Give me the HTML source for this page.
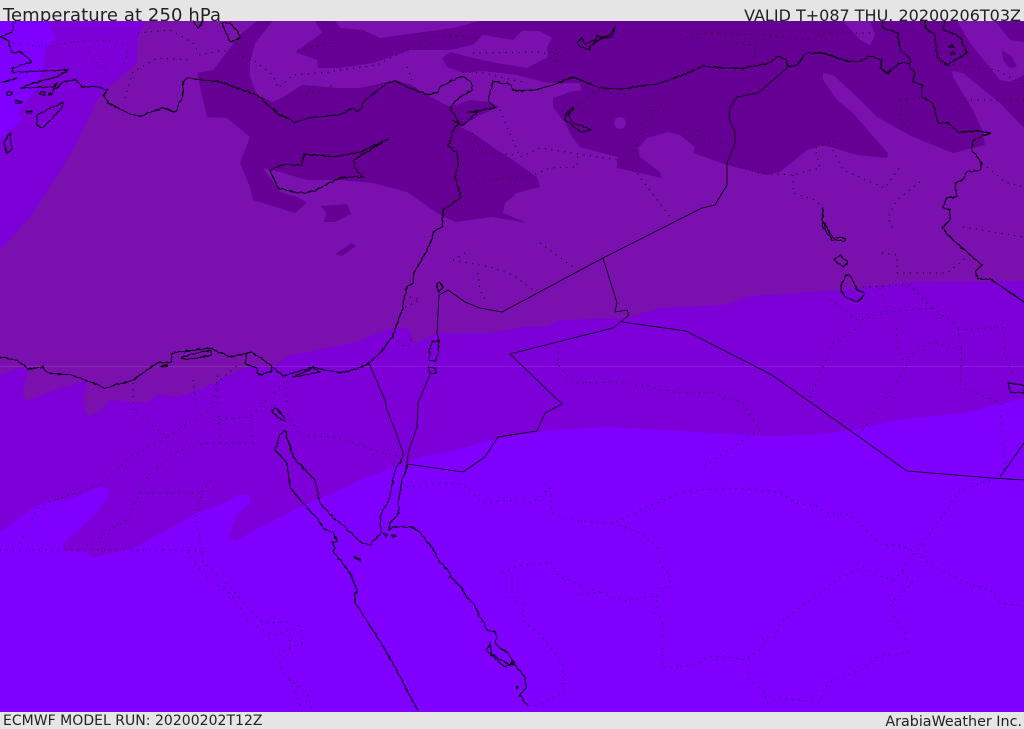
<!DOCTYPE html>
<html><head><meta charset="utf-8"><style>
html,body{margin:0;padding:0;width:1024px;height:729px;overflow:hidden;background:#e5e5e5}
svg{display:block;position:absolute;left:0;top:0}
.t{font-family:"DejaVu Sans",sans-serif;fill:#222}
.c{fill:none;stroke:#000;stroke-width:1.1;stroke-linejoin:round}
.b{fill:none;stroke:#000;stroke-width:.8;stroke-linejoin:round}
.d{fill:none;stroke:#000;stroke-width:1;stroke-dasharray:1 5.5}
</style></head><body>
<svg width="1024" height="729" viewBox="0 0 1024 729" xmlns="http://www.w3.org/2000/svg">
<defs><filter id="w" x="0" y="0" width="1024" height="729" filterUnits="userSpaceOnUse" color-interpolation-filters="sRGB">
<feTurbulence type="fractalNoise" baseFrequency=".28" numOctaves="2" seed="4" result="n"/>
<feDisplacementMap in="SourceGraphic" in2="n" scale="3" xChannelSelector="R" yChannelSelector="G"/>
</filter></defs>
<rect width="1024" height="729" fill="#e5e5e5"/>
<text class="t" x="3" y="21" font-size="18" textLength="218">Temperature at 250 hPa</text>
<text class="t" x="1021" y="21" font-size="16" text-anchor="end">VALID T+087 THU. 20200206T03Z</text>
<rect x="0" y="21" width="1024" height="691" fill="#7f00ff"/>
<text class="t" x="3" y="725" font-size="14" textLength="259.5">ECMWF MODEL RUN: 20200202T12Z</text>
<text class="t" x="1022" y="726" font-size="14.3" text-anchor="end">ArabiaWeather Inc.</text>

<!-- band 2 -->
<path fill="#7d00d8" d="M47 21L55 38L45 50L42 73L30 97L17 113L23 120L10 130L0 140L0 532L33 508L43 503L67 500L100 487L108 488L108 497L93 517L63 543L65 551L85 552L93 558L133 548L167 530L197 513L227 502L237 495L250 495L250 503L235 517L229 537L235 541L273 521L300 507L340 490L360 480L395 467L423 457L457 450L490 440L553 430L607 427L680 431L763 436L813 435L853 430L897 420L963 413L1024 398L1024 21Z"/>
<!-- band 3 -->
<path fill="#7a10ae" d="M145 21L137 40L137 63L113 83L97 100L83 130L67 160L33 213L10 240L0 250L0 375L20 367L28 370L22 393L27 401L47 393L87 380L83 403L88 417L102 410L110 400L133 402L147 402L160 394L177 397L207 387L233 373L253 365L273 367L290 355L333 347L357 342L373 335L393 328L408 328L412 340L418 343L437 333L490 333L523 327L547 326L560 320L627 318L660 308L680 307L723 305L750 296L840 290L913 282L1024 281L1024 21Z"/>
<!-- band 4 dark -->
<path fill="#660094" d="M257 21L1024 21L1024 128L1000 103L963 73L952 71L953 77L973 110L982 130L985 145L953 153L913 137L877 117L853 93L833 75L823 73L823 80L837 100L853 113L870 133L888 153L887 158L857 155L823 145L807 150L780 172L767 175L727 165L693 153L695 147L680 135L668 132L647 138L638 148L640 157L660 172L662 178L640 173L617 168L617 157L580 147L572 137L565 123L553 107L553 98L570 92L581 90L580 83L548 83L517 75L483 71L463 73L447 67L442 58L450 52L473 58L497 63L527 68L548 57L547 47L552 38L540 31L522 31L513 40L483 35L473 45L450 50L410 50L373 63L340 68L318 68L317 60L295 52L322 33L315 21L273 21L255 43L250 63L250 77L257 95L273 102L283 97L302 85L340 88L360 88L383 83L395 80L412 85L427 95L450 107L470 100L490 102L500 107L480 115L460 127L473 133L497 150L513 160L537 177L540 187L517 193L505 203L503 213L527 223L493 217L455 222L437 213L407 192L373 183L340 180L307 180L280 172L263 168L270 178L280 192L300 198L307 203L295 213L253 200L250 187L240 163L250 137L227 118L207 117L197 73L213 70L223 57L240 35Z"/>
<!-- lighter patches -->
<path fill="#7a10ae" d="M335 21L480 21L453 28L423 32L380 38L363 30L340 28Z"/>
<path fill="#7a10ae" d="M843 21L860 40L870 45L875 35L870 21Z"/>
<path fill="#7a10ae" d="M957 21L970 43L1000 80L1010 82L1024 75L1024 42L1010 40L995 21Z"/>
<path fill="#660094" d="M1002 50L1012 57L1017 67L1010 68L1003 60Z"/>
<ellipse cx="620" cy="123" rx="6" ry="6" fill="#7a10ae"/>
<path fill="#660094" d="M320 206L347 204L351 214L335 222L323 222Q330 214 320 206Z"/>
<path fill="#660094" d="M335 254L352 243L356 246L342 256Z"/>
<!-- faint line -->
<rect x="0" y="366" width="1024" height="1" fill="#fff" opacity=".11"/>

<!-- coasts -->
<g class="c" filter="url(#w)">
<path d="M13 21L12 32L0 37L8 40L12 53L20 52L30 60L31 62L13 68L13 73L18 72L68 70L57 77L37 82L20 88L53 87L57 83L52 92L63 82L75 80L83 87L97 87L108 90L103 95L108 103L122 110L132 115L140 116L163 108L175 112L183 95L183 82L188 78L220 82L257 95L277 113L295 122L313 117L340 115L352 108L357 112L362 107L363 102L387 83L397 81L405 86L428 95L438 92L440 87L457 78L463 76L472 83L472 90L460 97L450 107L459 123L452 132L450 143L447 145L457 153L458 165L455 177L460 193L460 198L443 210L442 227L433 232L432 240L420 263L414 272L413 283L407 287L402 310L392 337L380 353L369 363L357 369L340 373L313 367L283 376L270 365L252 352L230 357L210 348L172 353L172 362L157 363L133 380L105 388L93 383L72 375L47 373L43 367L28 369L17 360L0 357"/>
<path d="M182 357L210 350L212 355L197 358L182 359Z"/>
<path d="M160 366L168 365L166 367Z"/>
<path d="M247 353L245 364L257 368L258 375L271 372L272 366"/>
<path d="M292 377L313 368L320 372L305 375Z"/>
<path d="M270 170L283 165L302 165L304 154L333 157L360 152L388 139L365 153L354 160L355 168L363 177L352 177L340 178L320 188L307 193L293 192L278 188L273 177Z"/>
<path d="M37 115L63 102L62 108L43 128L37 125Z"/>
<path d="M10 133L4 143L7 153L12 150Z"/>
<path d="M0 83L17 78L5 82"/>
<path d="M7 92L12 92L12 95L7 95Z"/><path d="M15 100L22 102L21 103L16 103Z"/><path d="M27 111L32 111L32 113L27 113Z"/>
<path d="M40 92L45 92L45 96L40 94Z"/><path d="M49 93L53 94L49 95Z"/>
<path d="M193 21L198 28L203 21"/>
<path d="M222 23L230 42L241 38L238 32L230 23Z"/>
<path d="M577 42L582 38L585 44L596 40L597 35L600 38L610 35L615 27L612 37L600 39L590 46L590 50L580 47Z"/>
<path d="M573 107L565 115L565 120L580 132L592 130L585 127L573 123L568 115L573 110Z"/>
<path d="M488 100L493 81L512 85L513 91L535 90L553 85L573 77L600 88L623 89L660 83L680 76L703 66L723 68L743 68L770 63L778 56L787 60L787 67L797 65L806 53L823 53L847 61L860 61L870 56L882 60L880 68L887 73L900 63L909 63L910 68L915 72L913 82L922 85L922 97L933 103L938 123L948 123L958 132L980 131L990 133L973 140L972 150L982 163L980 170L967 172L963 180L955 183L957 197L947 197L943 207L950 210L950 220L942 228L953 240L967 252L982 265L975 272L978 279L990 279L1024 302"/>
<path d="M488 100L495 108L468 112L478 112L463 125L452 120"/>
<path d="M882 21L883 28L898 33L900 50L910 58L910 63"/>
<path d="M925 21L925 28L935 35L937 57L947 65L967 53L960 37L952 33L943 30L945 21"/>
<path d="M437 283L440 282L443 287L439 292L437 288Z"/>
<path d="M432 342L439 340L438 353L435 362L430 360L429 350Z"/>
<path d="M428 367L435 368L437 373L430 374Z"/>
<path d="M408 453L407 467L402 480L398 503L399 513L390 523L389 530L393 527L412 527L420 532L435 552L437 558L450 573L452 578L462 588L467 598L473 603L487 630L495 632L497 637L495 643L500 648L508 653L515 665L525 677L526 688L520 695L528 706"/>
<path d="M403 457L395 470L393 480L390 497L380 517L381 533L370 545L362 543L340 523L333 517L320 503L315 480L313 478L293 457L285 430L280 435L275 450L287 463L289 480L290 487L300 500L317 518L325 530L333 532L337 542L332 542L335 548L333 552L340 560L350 573L358 592L355 593L355 602L377 637L393 663L408 693L418 710"/>
<path d="M271 410L276 408L284 417L285 421L276 416Z"/>
<path d="M384 533L388 534L386 537Z"/><path d="M392 535L396 536L393 538Z"/><path d="M354 557L360 559L360 561Z"/>
<path d="M487 651L490 643L491 654L510 665L512 660L515 663L505 667Z"/>
<path d="M516 687L518 687L517 689Z"/><path d="M448 577L449 578"/>
<path d="M834 260L840 255L848 262L843 267Z"/>
<path d="M846 275L842 283L841 290L845 297L858 302L865 293L857 290L850 275Z"/>
<path d="M823 208L822 220L833 238L845 238L845 241L832 240L822 225Z"/>
<path d="M1008 383L1024 385L1024 393L1010 392Z"/>
<path d="M949 47L952 45L954 48Z"/><path d="M952 51L955 53L951 55Z"/>
</g>
<!-- borders -->
<g class="b">
<path d="M787 68L758 93L737 97L730 107L729 118L735 133L735 143L727 163L727 185L715 205L702 208L680 219L603 258L502 312L480 308L465 302L448 290L439 295L437 333L439 340"/>
<path d="M603 258L617 303L615 312L627 310L629 315L613 328L510 354L562 404L545 413L537 431L498 437L485 457L463 472L407 464"/>
<path d="M622 322L686 331L772 375L907 471L992 478L1024 480"/>
<path d="M1000 477L1024 443"/>
<path d="M430 375L418 403L417 427L408 453"/>
<path d="M369 363L385 400L387 410L395 430L403 453L403 457"/>
</g>
<!-- dotted -->
<g class="d">
<path d="M684 492L700 490L735 488L780 492L795 503L815 505L825 512L850 515L862 525L875 540L880 545L900 545L915 552L925 560L945 572L960 580L990 590L1000 603L1024 606"/>
<path d="M990 480L960 490L950 505L935 525L920 548L908 560L902 572"/>
<path d="M680 667L697 664L707 657L723 656L745 660L763 648L763 638L775 637L780 623L800 607L820 593L840 577L863 567L877 575L893 580L902 572L913 583L892 602L890 610L905 633L908 653L877 657L860 670L827 683L820 702L780 698L767 703L763 690L750 680L745 660"/>
<path d="M407 487L447 483L463 485L483 503L510 500L532 503L550 488L552 513L580 521L613 523L640 510L680 493"/>
<path d="M613 523L640 533L657 547L662 567L673 577L660 595L623 601L600 592L580 595"/>
<path d="M550 563L560 577L600 592"/>
<path d="M502 572L523 565L550 563"/>
<path d="M512 577L512 598L524 605L522 620L540 634L563 663L563 693L532 707"/>
<path d="M657 600L655 613L663 620L662 643L663 667L680 667"/>
<path d="M0 550L187 550L203 552"/>
<path d="M20 543L37 510L45 503L100 485"/>
<path d="M87 545L127 520L140 493L143 480"/>
<path d="M140 493L202 493"/>
<path d="M210 480L202 493L195 517L202 550L203 562L230 587L253 613L263 623L287 622L302 627L302 643L280 653L280 667L290 680L307 693L312 710"/>
<path d="M188 552L203 575L230 593L250 623L273 635L290 630L290 653"/>
<path d="M290 680L302 710"/>
<path d="M133 383L133 410L167 437L213 407L218 373"/>
<path d="M193 380L197 413"/>
<path d="M213 420L250 417L287 380L287 413L300 435L337 437"/>
<path d="M107 478L130 457L167 437"/>
<path d="M147 478L173 453L203 443L253 443L250 417"/>
<path d="M220 443L217 383L240 363"/>
<path d="M340 438L373 450L402 457"/>
<path d="M453 260L490 267L513 275L533 290"/>
<path d="M540 243L573 267"/>
<path d="M478 273L480 290L487 303"/>
<path d="M453 260L470 250"/>
<path d="M393 337L407 348L412 337"/>
<path d="M410 297L420 300L403 308"/>
<path d="M560 347L557 363L573 383L623 382L680 393L713 393L743 403L760 430L748 437L703 467"/>
<path d="M810 397L833 343L857 328L860 320L887 312L932 308L957 325L962 350L960 387L1000 403L1005 467L1000 477"/>
<path d="M863 430L907 367L897 347L897 323"/>
<path d="M907 357L923 347L933 342L963 350"/>
<path d="M958 330L1003 327L1005 357L1013 373"/>
<path d="M830 300L857 320"/>
<path d="M880 288L887 312"/>
<path d="M863 287L910 285L933 310"/>
<path d="M897 273L947 273L967 257"/>
<path d="M882 253L897 255L897 273"/>
<path d="M680 40L700 33L720 33L757 35L817 40L820 33L873 33"/>
<path d="M730 43L757 45L753 60"/>
<path d="M680 125L700 138L730 145"/>
<path d="M727 163L760 173L793 175L820 168L815 148L837 140"/>
<path d="M793 175L793 193L815 200L823 208"/>
<path d="M833 150L843 170L885 188L900 167"/>
<path d="M920 182L897 200L888 217L893 230"/>
<path d="M900 100L920 98"/><path d="M900 100L903 128L918 128"/>
<path d="M953 117L967 100L1024 100"/>
<path d="M940 63L997 70L1024 85"/>
<path d="M963 227L1024 237"/>
<path d="M982 163L1005 182L1024 187"/>
<path d="M340 70L377 65L400 53L440 35L477 38"/>
<path d="M473 53L543 52L557 63L560 70"/>
<path d="M463 72L483 73L527 83"/>
<path d="M500 110L517 150L520 157L540 148L617 160L637 173L670 217"/>
<path d="M472 133L483 153L517 155"/>
<path d="M468 173L477 182L533 175L550 168L577 167L578 153"/>
<path d="M557 60L553 50L567 48"/>
<path d="M573 110L597 90L655 100L673 117"/>
<path d="M630 157L655 110"/>
<path d="M407 67L412 80"/>
<path d="M13 43L47 47L67 43L93 40L128 43L127 58L122 68L125 75"/>
<path d="M88 53L100 65L110 75"/>
<path d="M138 33L170 30L193 43L200 55L223 50L253 60L273 75L278 88L293 75L330 72L340 70"/>
<path d="M125 98L133 72L157 58L193 60"/>
<path d="M287 97L317 93L333 85"/>
<path d="M298 50L338 42"/>
<path d="M15 22L43 22"/>
</g>
</svg>
</body></html>
